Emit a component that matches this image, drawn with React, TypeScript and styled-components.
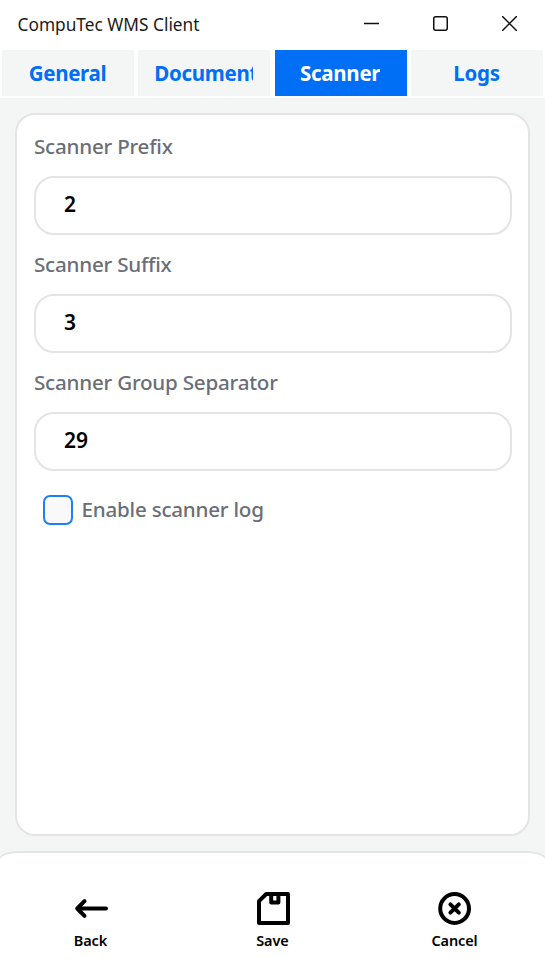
import React, { useState } from "react";
import styled, { createGlobalStyle } from "styled-components";

const GlobalStyle = createGlobalStyle`
  *, *::before, *::after { box-sizing: border-box; }
  html, body, #root { height: 100%; margin: 0; }
  body { overflow: hidden; font-family: "Noto Sans", "Open Sans", sans-serif; }
`;

const Window = styled.div`
  display: flex;
  flex-direction: column;
  height: 971px;
  background: #f4f6f5;
  overflow: hidden;
`;

const TitleBar = styled.header`
  display: flex;
  align-items: center;
  justify-content: space-between;
  flex: none;
  height: 48px;
  padding: 0 1px 0 17.5px;
  background: #fff;
`;

const Title = styled.h1`
  margin: 2px 0 0;
  font-size: 17.3px;
  font-weight: 400;
  line-height: 24px;
  color: #1b1b1b;
`;

const WindowControls = styled.div`
  display: flex;
  margin-bottom: 2px;
`;

const WindowButton = styled.button`
  display: grid;
  place-items: center;
  width: 69px;
  height: 45px;
  padding: 0;
  border: 0;
  background: none;

  svg {
    display: block;
    fill: none;
    stroke: #111;
    stroke-width: 1.5;
  }
`;

const Tabs = styled.nav`
  display: grid;
  grid-template-columns: repeat(4, 132px);
  justify-content: space-between;
  flex: none;
  height: 50px;
  padding: 2px;
  background: #fff;
`;

const Tab = styled.button<{ $active: boolean }>`
  display: flex;
  justify-content: safe center;
  align-items: center;
  height: 46px;
  padding: 0 17px 1px 16px;
  border: 0;
  font: 700 20.5px "Noto Sans", sans-serif;
  letter-spacing: -0.3px;
  color: ${(p) => (p.$active ? "#fff" : "#006ff5")};
  background: ${(p) => (p.$active ? "#006ff5" : "#f4f6f5")};
`;

const TabLabel = styled.span`
  overflow: hidden;
  line-height: 30px;
  white-space: nowrap;
`;

const Card = styled.main`
  flex: none;
  height: 723px;
  margin: 15px 15px 0;
  padding: 17px 16px 0 17px;
  border: 2px solid #e4e4e4;
  border-radius: 20px;
  background: #fff;
`;

const Field = styled.label`
  display: block;
  height: 118px;
`;

const Caption = styled.span`
  display: block;
  height: 44px;
  font-size: 20.6px;
  font-weight: 500;
  letter-spacing: -0.22px;
  line-height: 29px;
  color: #6a6e76;
  white-space: nowrap;
`;

const TextInput = styled.input`
  display: block;
  width: 100%;
  height: 59px;
  padding: 0 28px 4px;
  border: 2px solid #e4e4e4;
  border-radius: 20px;
  outline: 0;
  background: #fff;
  font: 600 21px "Noto Sans", sans-serif;
  color: #000;
`;

const CheckRow = styled.label`
  display: flex;
  align-items: center;
  gap: 8.5px;
  height: 30px;
  margin: 9px 0 0 9px;
  font-size: 20.6px;
  font-weight: 500;
  letter-spacing: -0.22px;
  color: #6a6e76;
`;

const CheckText = styled.span`
  margin-bottom: 2px;
`;

const Checkbox = styled.input`
  appearance: none;
  width: 30px;
  height: 30px;
  margin: 0;
  border: 2px solid #1c7ff6;
  border-radius: 7px;
  background: #f9f9f9;

  &:checked { background: #006ff5; }
`;

const ActionBar = styled.footer`
  display: grid;
  grid-template-columns: repeat(3, 182px);
  justify-content: center;
  flex: 1;
  margin: 15px -2px 0;
  padding-top: 36px;
  border: 2px solid #e4e4e4;
  border-bottom: 0;
  border-radius: 20px 20px 0 0 / 9px 9px 0 0;
  background: #fff;
`;

const Action = styled.button`
  display: flex;
  flex-direction: column;
  align-items: center;
  padding: 0;
  border: 0;
  background: none;
  font: 600 14.5px/20px "Noto Sans", sans-serif;
  letter-spacing: -0.1px;
  color: #000;

  svg {
    display: block;
    margin-bottom: 3px;
    fill: none;
    stroke: #000;
    stroke-width: 4;
    stroke-linecap: round;
    stroke-linejoin: round;
  }
`;

const TABS = ["General", "Documents", "Scanner", "Logs"];

const FIELDS = [
  { caption: "Scanner Prefix", value: "2" },
  { caption: "Scanner Suffix", value: "3" },
  { caption: "Scanner Group Separator", value: "29" },
];

const BackIcon = () => (
  <svg width="36" height="38" viewBox="0 0 36 38">
    <path d="m11.5 12.2-7.3 7.3 7.3 7.3M5 19.5h28" />
  </svg>
);

const SaveIcon = () => (
  <svg width="36" height="38" viewBox="0 0 36 38">
    <path d="M11.2 5H33v29H4V12.2Z" />
    <path d="M16.2 5v8.5h7.2V5" />
  </svg>
);

const CancelIcon = () => (
  <svg width="36" height="38" viewBox="0 0 36 38">
    <circle cx="17.6" cy="19.5" r="14.4" />
    <path d="m13.4 15.3 8.4 8.4m0-8.4-8.4 8.4" />
  </svg>
);

export default function App() {
  const [tab, setTab] = useState("Scanner");

  return (
    <>
      <GlobalStyle />
      <Window>
        <TitleBar>
          <Title>CompuTec WMS Client</Title>
          <WindowControls>
            <WindowButton aria-label="Minimize">
              <svg width="15" height="15"><path d="M0 7.5h15" /></svg>
            </WindowButton>
            <WindowButton aria-label="Maximize">
              <svg width="15" height="15"><rect x="0.75" y="0.75" width="13.5" height="13.5" rx="2" /></svg>
            </WindowButton>
            <WindowButton aria-label="Close">
              <svg width="15" height="15"><path d="m0 0 15 15M15 0 0 15" /></svg>
            </WindowButton>
          </WindowControls>
        </TitleBar>
        <Tabs>
          {TABS.map((name) => (
            <Tab key={name} $active={name === tab} onClick={() => setTab(name)}>
              <TabLabel>{name}</TabLabel>
            </Tab>
          ))}
        </Tabs>
        <Card>
          {FIELDS.map((field) => (
            <Field key={field.caption}>
              <Caption>{field.caption}</Caption>
              <TextInput defaultValue={field.value} />
            </Field>
          ))}
          <CheckRow>
            <Checkbox type="checkbox" />
            <CheckText>Enable scanner log</CheckText>
          </CheckRow>
        </Card>
        <ActionBar>
          <Action><BackIcon />Back</Action>
          <Action><SaveIcon />Save</Action>
          <Action><CancelIcon />Cancel</Action>
        </ActionBar>
      </Window>
    </>
  );
}
